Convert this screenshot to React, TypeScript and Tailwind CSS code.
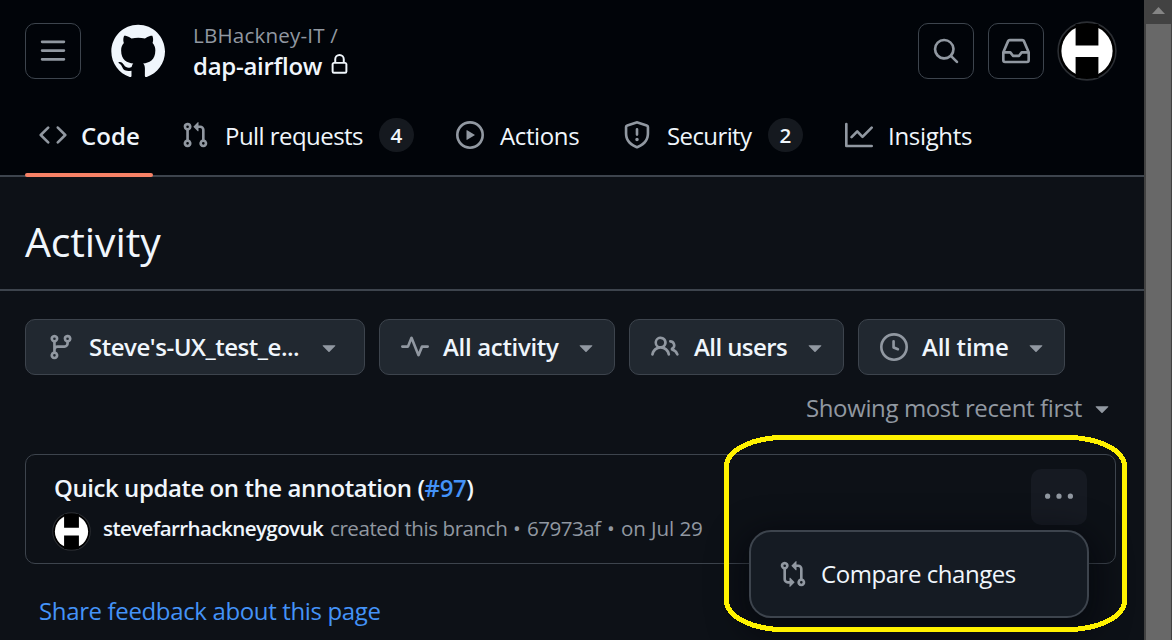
import type { ReactNode } from "react";

const paths = {
  bars: "M1 2.75A.75.75 0 0 1 1.75 2h12.5a.75.75 0 0 1 0 1.5H1.75A.75.75 0 0 1 1 2.75Zm0 5A.75.75 0 0 1 1.75 7h12.5a.75.75 0 0 1 0 1.5H1.75A.75.75 0 0 1 1 7.75ZM1.75 12h12.5a.75.75 0 0 1 0 1.5H1.75a.75.75 0 0 1 0-1.5Z",
  search: "M10.68 11.74a6 6 0 0 1-7.922-8.982 6 6 0 0 1 8.982 7.922l3.04 3.04a.749.749 0 0 1-.326 1.275.749.749 0 0 1-.734-.215ZM11.5 7a4.499 4.499 0 1 0-8.997 0A4.499 4.499 0 0 0 11.5 7Z",
  inbox: "M2.8 2.06A1.75 1.75 0 0 1 4.41 1h7.18c.7 0 1.333.417 1.61 1.06l2.74 6.395c.04.093.06.194.06.295v4.5A1.75 1.75 0 0 1 14.25 15H1.75A1.75 1.75 0 0 1 0 13.25v-4.5c0-.101.02-.202.06-.295Zm1.61.44a.25.25 0 0 0-.23.152L1.887 8H4.75a.75.75 0 0 1 .6.3L6.625 10h2.75l1.275-1.7a.75.75 0 0 1 .6-.3h2.863L11.82 2.652a.25.25 0 0 0-.23-.152Zm10.09 7h-2.875l-1.275 1.7a.75.75 0 0 1-.6.3h-3.5a.75.75 0 0 1-.6-.3L4.375 9.5H1.5v3.75c0 .138.112.25.25.25h12.5a.25.25 0 0 0 .25-.25Z",
  lock: "M4 4a4 4 0 0 1 8 0v2h.25c.966 0 1.75.784 1.75 1.75v5.5A1.75 1.75 0 0 1 12.25 15h-8.5A1.75 1.75 0 0 1 2 13.25v-5.5C2 6.784 2.784 6 3.75 6H4Zm8.25 3.5h-8.5a.25.25 0 0 0-.25.25v5.5c0 .138.112.25.25.25h8.5a.25.25 0 0 0 .25-.25v-5.5a.25.25 0 0 0-.25-.25ZM10.5 6V4a2.5 2.5 0 1 0-5 0v2Z",
  code: "m11.28 3.22 4.25 4.25a.75.75 0 0 1 0 1.06l-4.25 4.25a.749.749 0 0 1-1.275-.326.749.749 0 0 1 .215-.734L13.94 8l-3.72-3.72a.749.749 0 0 1 .326-1.275.749.749 0 0 1 .734.215Zm-6.56 0a.751.751 0 0 1 1.042.018.751.751 0 0 1 .018 1.042L2.06 8l3.72 3.72a.749.749 0 0 1-.326 1.275.749.749 0 0 1-.734-.215L.47 8.53a.75.75 0 0 1 0-1.06Z",
  pull: "M1.5 3.25a2.25 2.25 0 1 1 3 2.122v5.256a2.251 2.251 0 1 1-1.5 0V5.372A2.25 2.25 0 0 1 1.5 3.25Zm5.677-.177L9.573.677A.25.25 0 0 1 10 .854V2.5h1A2.5 2.5 0 0 1 13.5 5v5.628a2.251 2.251 0 1 1-1.5 0V5a1 1 0 0 0-1-1h-1v1.646a.25.25 0 0 1-.427.177L7.177 3.427a.25.25 0 0 1 0-.354ZM3.75 2.5a.75.75 0 1 0 0 1.5.75.75 0 0 0 0-1.5Zm0 9.5a.75.75 0 1 0 0 1.5.75.75 0 0 0 0-1.5Zm8.25.75a.75.75 0 1 0 1.5 0 .75.75 0 0 0-1.5 0Z",
  play: "M8 0a8 8 0 1 1 0 16A8 8 0 0 1 8 0ZM1.5 8a6.5 6.5 0 1 0 13 0 6.5 6.5 0 0 0-13 0Zm4.879-2.773 4.264 2.559a.25.25 0 0 1 0 .428l-4.264 2.559A.25.25 0 0 1 6 10.559V5.442a.25.25 0 0 1 .379-.215Z",
  shield: "M7.467.133a1.748 1.748 0 0 1 1.066 0l5.25 1.68A1.75 1.75 0 0 1 15 3.48V7c0 1.566-.32 3.182-1.303 4.682-.983 1.498-2.585 2.813-5.032 3.855a1.697 1.697 0 0 1-1.33 0c-2.447-1.042-4.049-2.357-5.032-3.855C1.32 10.182 1 8.566 1 7V3.48a1.755 1.755 0 0 1 1.217-1.667Zm.61 1.429a.25.25 0 0 0-.153 0l-5.25 1.68a.25.25 0 0 0-.174.238V7c0 1.358.275 2.666 1.057 3.86.784 1.194 2.121 2.34 4.366 3.297a.196.196 0 0 0 .154 0c2.245-.956 3.582-2.104 4.366-3.298C13.225 9.666 13.5 8.36 13.5 7V3.48a.251.251 0 0 0-.174-.237l-5.25-1.68ZM8.75 4.75v3a.75.75 0 0 1-1.5 0v-3a.75.75 0 0 1 1.5 0ZM9 10.5a1 1 0 1 1-2 0 1 1 0 0 1 2 0Z",
  graph: "M1.5 1.75V13.5h13.75a.75.75 0 0 1 0 1.5H.75a.75.75 0 0 1-.75-.75V1.75a.75.75 0 0 1 1.5 0Zm14.28 2.53-5.25 5.25a.75.75 0 0 1-1.06 0L7 7.06 4.28 9.78a.751.751 0 0 1-1.042-.018.751.751 0 0 1-.018-1.042l3.25-3.25a.75.75 0 0 1 1.06 0L10 7.94l4.72-4.72a.751.751 0 0 1 1.042.018.751.751 0 0 1 .018 1.042Z",
  branch: "M9.5 3.25a2.25 2.25 0 1 1 3 2.122V6A2.5 2.5 0 0 1 10 8.5H6a1 1 0 0 0-1 1v1.128a2.251 2.251 0 1 1-1.5 0V5.372a2.25 2.25 0 1 1 1.5 0v1.836A2.493 2.493 0 0 1 6 7h4a1 1 0 0 0 1-1v-.628A2.25 2.25 0 0 1 9.5 3.25Zm-6 0a.75.75 0 1 0 1.5 0 .75.75 0 0 0-1.5 0Zm8.25-.75a.75.75 0 1 0 0 1.5.75.75 0 0 0 0-1.5ZM4.25 12a.75.75 0 1 0 0 1.5.75.75 0 0 0 0-1.5Z",
  pulse: "M6 2c.306 0 .582.187.696.471L10 10.731l1.304-3.26A.751.751 0 0 1 12 7h3.25a.75.75 0 0 1 0 1.5h-2.742l-1.812 4.528a.751.751 0 0 1-1.392 0L6 4.77 4.696 8.03A.75.75 0 0 1 4 8.5H.75a.75.75 0 0 1 0-1.5h2.742l1.812-4.529A.751.751 0 0 1 6 2Z",
  people: "M2 5.5a3.5 3.5 0 1 1 5.898 2.549 5.508 5.508 0 0 1 3.034 4.084.75.75 0 1 1-1.482.235 4 4 0 0 0-7.9 0 .75.75 0 0 1-1.482-.236A5.507 5.507 0 0 1 3.102 8.05 3.493 3.493 0 0 1 2 5.5ZM11 4a3.001 3.001 0 0 1 2.22 5.018 5.01 5.01 0 0 1 2.56 3.012.749.749 0 0 1-.885.954.752.752 0 0 1-.549-.514 3.507 3.507 0 0 0-2.522-2.372.75.75 0 0 1-.574-.73v-.352a.75.75 0 0 1 .416-.672A1.5 1.5 0 0 0 11 5.5.75.75 0 0 1 11 4Zm-5.5-.5a2 2 0 1 0-.001 3.999A2 2 0 0 0 5.5 3.5Z",
  clock: "M8 0a8 8 0 1 1 0 16A8 8 0 0 1 8 0ZM1.5 8a6.5 6.5 0 1 0 13 0 6.5 6.5 0 0 0-13 0Zm7-3.25v2.992l2.028.812a.75.75 0 0 1-.557 1.392l-2.5-1A.751.751 0 0 1 7 8.25v-3.5a.75.75 0 0 1 1.5 0Z",
  caret: "m4.427 7.427 3.396 3.396a.25.25 0 0 0 .354 0l3.396-3.396A.25.25 0 0 0 11.396 7H4.604a.25.25 0 0 0-.177.427Z",
  kebab: "M8 9a1.5 1.5 0 1 0 0-3 1.5 1.5 0 0 0 0 3ZM1.5 9a1.5 1.5 0 1 0 0-3 1.5 1.5 0 0 0 0 3Zm13 0a1.5 1.5 0 1 0 0-3 1.5 1.5 0 0 0 0 3Z",
  compare: "M9.573.677A.25.25 0 0 1 10 .854V2.5h1A2.5 2.5 0 0 1 13.5 5v5.628a2.251 2.251 0 1 1-1.5 0V5a1 1 0 0 0-1-1h-1v1.646a.25.25 0 0 1-.427.177L7.177 3.427a.25.25 0 0 1 0-.354ZM6 12v-1.646a.25.25 0 0 1 .427-.177l2.396 2.396a.25.25 0 0 1 0 .354l-2.396 2.396A.25.25 0 0 1 6 15.146V13.5H5A2.5 2.5 0 0 1 2.5 11V5.372a2.25 2.25 0 1 1 1.5 0V11a1 1 0 0 0 1 1ZM4 3.25a.75.75 0 1 0-1.5 0 .75.75 0 0 0 1.5 0ZM12.75 12a.75.75 0 1 0 0 1.5.75.75 0 0 0 0-1.5Z",
};

type IconName = keyof typeof paths;

function Icon({ name, className = "size-7" }: { name: IconName; className?: string }) {
  return (
    <svg viewBox="0 0 16 16" fill="currentColor" className={`shrink-0 ${className}`} aria-hidden="true">
      <path d={paths[name]} />
    </svg>
  );
}

function GitHubMark() {
  return (
    <svg viewBox="0 0 24 24" fill="currentColor" className="ml-7 size-14 shrink-0 text-[#f0f6fc]" aria-hidden="true">
      <path d="M12.5.75C6.146.75 1 5.896 1 12.25c0 5.089 3.292 9.387 7.863 10.91.575.101.79-.244.79-.546 0-.273-.014-1.178-.014-2.142-2.889.532-3.636-.704-3.866-1.35-.13-.331-.69-1.352-1.18-1.625-.402-.216-.977-.748-.014-.762.906-.014 1.553.834 1.769 1.179 1.035 1.74 2.688 1.25 3.349.948.1-.747.402-1.25.733-1.538-2.559-.287-5.232-1.279-5.232-5.678 0-1.25.445-2.285 1.178-3.09-.115-.288-.517-1.467.115-3.048 0 0 .963-.302 3.163 1.179.92-.259 1.897-.388 2.875-.388.977 0 1.955.13 2.875.388 2.2-1.495 3.162-1.179 3.162-1.179.633 1.581.23 2.76.115 3.048.733.805 1.179 1.825 1.179 3.09 0 4.413-2.688 5.39-5.247 5.678.417.36.776 1.05.776 2.128 0 1.538-.014 2.774-.014 3.162 0 .302.216.662.79.547C20.709 21.637 24 17.324 24 12.25 24 5.896 18.854.75 12.5.75Z" />
    </svg>
  );
}

function Avatar({ className }: { className: string }) {
  return (
    <svg viewBox="0 0 60 60" className={`shrink-0 ${className}`} aria-hidden="true">
      <circle cx="30" cy="30" r="28.9" fill="#000" stroke="#2b2e33" strokeWidth="1.6" />
      <circle cx="30" cy="30" r="25.6" fill="#fff" />
      <path fill="#000" d="M18.6 3h22.8v21.4H18.6ZM18.6 36h22.8v21H18.6Z" />
    </svg>
  );
}

function HeaderButton({ name, label }: { name: IconName; label: string }) {
  return (
    <button aria-label={label} className="flex size-14 shrink-0 items-center justify-center rounded-[10px] border border-[#3d444d] text-[#9198a1]">
      <Icon name={name} />
    </button>
  );
}

function Counter({ children }: { children: ReactNode }) {
  return (
    <span className="flex h-[34px] w-[35px] shrink-0 items-center justify-center rounded-full bg-[#15191f] text-[20.6px] font-semibold">
      {children}
    </span>
  );
}

function Filter({ name, label, className, gap, text }: { name: IconName; label: string; className: string; gap: string; text: string }) {
  return (
    <button className={`flex h-14 shrink-0 items-center rounded-[10px] border border-[#3d444d] bg-[#212830] pl-[21px] text-[#9198a1] ${className}`}>
      <Icon name={name} />
      <span className={`whitespace-nowrap font-semibold text-[#f0f6fc] ${gap} ${text}`}>{label}</span>
      <Icon name="caret" className="ml-auto size-7" />
    </button>
  );
}

export default function App() {
  return (
    <div className="flex h-[640px] w-[1172px] overflow-hidden bg-[#0d1117] font-['Open_Sans',sans-serif] text-2xl leading-8 text-[#f0f6fc]">
      <div className="relative flex w-[1144px] shrink-0 flex-col">
        <header className="flex h-[177px] shrink-0 flex-col border-b-2 border-[#3d444d] bg-[#010409]">
          <div className="flex items-start pl-[25px] pr-[27px] pt-[21px]">
            <div className="flex pt-0.5">
              <HeaderButton name="bars" label="Open menu" />
              <GitHubMark />
            </div>
            <div className="ml-7 flex flex-col whitespace-nowrap">
              <span className="h-7 text-[20.6px] leading-7 tracking-[0.18px] text-[#9198a1]">LBHackney-IT /</span>
              <div className="flex h-[34px] items-center">
                <span className="w-[136px] font-semibold tracking-[-0.27px]">dap-airflow</span>
                <Icon name="lock" className="size-[21px] -translate-y-0.5" />
              </div>
            </div>
            <div className="ml-auto flex gap-[13px]">
              <div className="flex gap-3.5 pt-0.5">
                <HeaderButton name="search" label="Search" />
                <HeaderButton name="inbox" label="Inbox" />
              </div>
              <Avatar className="size-[60px]" />
            </div>
          </div>
          <nav className="-mb-0.5 mt-auto flex h-[80px] whitespace-nowrap pl-[25px]">
            <div className="flex w-32 shrink-0 flex-col">
              <div className="flex h-[76px] items-center pl-3.5">
                <Icon name="code" className="size-7 text-[#9198a1]" />
                <span className="ml-3.5 pt-0.5 font-semibold tracking-[0.1px]">Code</span>
              </div>
              <div className="h-1 rounded-sm bg-[#f78166]" />
            </div>
            <div className="ml-7 flex h-[76px] w-[275px] items-center">
              <Icon name="pull" className="size-7 text-[#9198a1]" />
              <span className="ml-4 w-[154px] pt-0.5 tracking-[-0.55px]">Pull requests</span>
              <Counter>4</Counter>
            </div>
            <div className="flex h-[76px] w-[167px] items-center">
              <Icon name="play" className="size-7 text-[#9198a1]" />
              <span className="ml-4 pt-0.5 tracking-[-0.38px]">Actions</span>
            </div>
            <div className="flex h-[76px] w-[222px] items-center">
              <Icon name="shield" className="size-7 text-[#9198a1]" />
              <span className="ml-4 w-[101px] pt-0.5 tracking-[-0.6px]">Security</span>
              <Counter>2</Counter>
            </div>
            <div className="flex h-[76px] items-center">
              <Icon name="graph" className="size-7 text-[#9198a1]" />
              <span className="ml-[15px] pt-0.5 tracking-[-0.32px]">Insights</span>
            </div>
          </nav>
        </header>

        <div className="flex h-[114px] shrink-0 items-center border-b-2 border-[#3d444d] pl-[25px] pt-4">
          <h1 className="text-[41px] leading-[56px] tracking-[-0.12px]">Activity</h1>
        </div>

        <main className="flex flex-col pl-[25px] pr-7 pt-7">
          <div className="flex gap-3.5">
            <Filter name="branch" label="Steve's-UX_test_e..." className="w-[340px] pr-[21px]" gap="ml-3.5" text="tracking-[-0.47px]" />
            <Filter name="pulse" label="All activity" className="w-[236px] pr-3.5" gap="ml-3.5" text="tracking-[-0.32px]" />
            <Filter name="people" label="All users" className="w-[215px] pr-3.5" gap="ml-[15px]" text="tracking-[-0.58px]" />
            <Filter name="clock" label="All time" className="w-[207px] pr-3.5" gap="ml-3.5" text="tracking-[-0.22px]" />
          </div>

          <div className="mt-[17px] flex h-8 items-center justify-end whitespace-nowrap text-[#9198a1]">
            <span className="w-[282px] tracking-[-0.38px]">Showing most recent first</span>
            <Icon name="caret" />
          </div>

          <section className="mt-[30px] flex h-[110px] rounded-[10px] border border-[#3d444d] pl-[26px] pr-7">
            <div className="flex flex-1 flex-col whitespace-nowrap pt-[17px]">
              <p className="pl-0.5 font-semibold tracking-[-0.44px]">
                Quick update on the annotation (<a className="text-[#4493f8]">#97</a>)
              </p>
              <div className="mt-2 flex items-start text-[20.6px] leading-8 text-[#9198a1]">
                <Avatar className="size-[39px]" />
                <span className="ml-3 w-[227px] font-semibold tracking-[-0.61px] text-[#f0f6fc]">stevefarrhackneygovuk</span>
                <span className="w-[183px] tracking-[-0.46px]">created this branch</span>
                <span className="w-[14px]">•</span>
                <span className="w-[80px] tracking-[-0.55px]">67973af</span>
                <span className="w-[14px]">•</span>
                <span className="tracking-[-0.1px]">on Jul 29</span>
              </div>
            </div>
            <button aria-label="More options" className="mt-3.5 flex size-14 items-center justify-center rounded-[10px] bg-[#161a22] text-[#9198a1]">
              <Icon name="kebab" />
            </button>
          </section>

          <a className="mt-[31px] pl-3.5 tracking-[-0.36px] text-[#4493f8]">Share feedback about this page</a>
        </main>

        <div className="absolute left-[749px] top-[530px] flex h-[88px] w-[340px] items-center rounded-[22px] border-2 border-[#3d444d] bg-[#151b23] pl-7 shadow-[0_10px_32px_8px_rgba(1,4,9,0.55)]">
          <Icon name="compare" className="size-7 text-[#9198a1]" />
          <span className="ml-3.5 whitespace-nowrap tracking-[-0.45px]">Compare changes</span>
        </div>

        <svg className="absolute left-[720px] top-[430px] h-[210px] w-[412px]" viewBox="720 430 412 210" fill="none" aria-hidden="true">
          <rect x="726.5" y="437.5" width="398" height="192" rx="57" ry="29" stroke="#fff200" strokeWidth="5" shapeRendering="crispEdges" />
        </svg>
      </div>

      <div className="flex w-7 shrink-0 flex-col bg-[#424242] pl-0.5 pr-px">
        <div className="flex h-6 shrink-0 items-start justify-center pt-[7px]">
          <svg viewBox="0 0 13 7" className="h-[7px] w-[13px]" fill="#858585" aria-hidden="true">
            <path d="M6.5 0 13 7H0Z" />
          </svg>
        </div>
        <div className="flex-1 bg-[#686868]" />
      </div>
    </div>
  );
}
